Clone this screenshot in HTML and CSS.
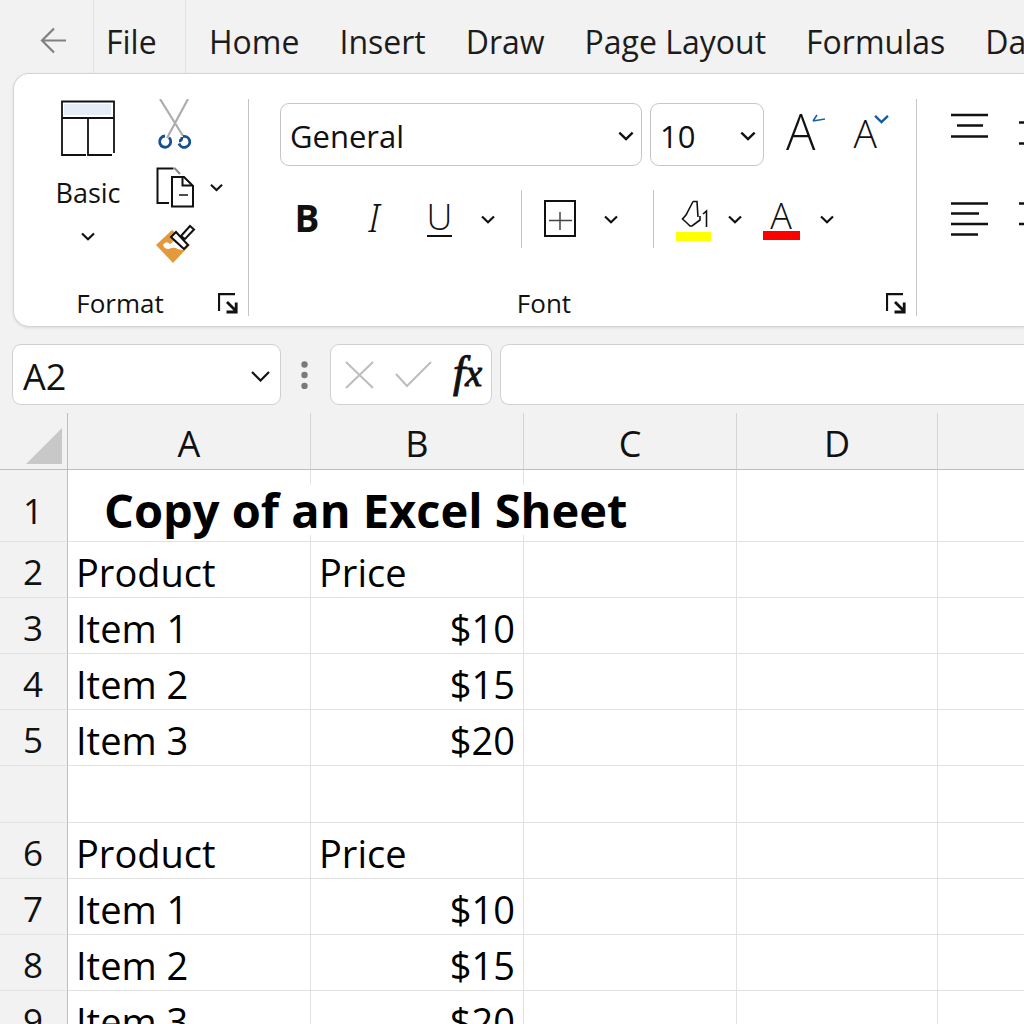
FILE: index.html
```html
<!DOCTYPE html>
<html lang="en">
<head>
<meta charset="utf-8">
<meta name="viewport" content="width=device-width, initial-scale=1">
<title>Copy of an Excel Sheet</title>
<link rel="stylesheet" href="styles.css">
</head>
<body>
<svg class="defs" aria-hidden="true">
  <symbol id="chevron" viewBox="0 0 14 9"><path d="M1 1.500 L7 7.300 L13 1.500" fill="none" stroke="currentColor" stroke-width="2.200"/></symbol>
  <symbol id="launcher" viewBox="0 0 20 21"><path d="M1 18V1.200H17" fill="none" stroke="currentColor" stroke-width="2.200"/><path d="M9 9L17 17M8.500 19H18.200V9.500" fill="none" stroke="currentColor" stroke-width="2.800"/></symbol>
</svg>

<nav class="tabs" aria-label="Ribbon tabs">
  <button class="back" aria-label="Back"><svg width="27" height="27" viewBox="0 0 27 27" fill="none" stroke="#808080" stroke-width="2.200"><path d="M26 13.500H2M14 1.500L2 13.500L14 25.500"/></svg></button>
  <a class="tab file" href="#file">File</a>
  <a class="tab" href="#home">Home</a>
  <a class="tab" href="#insert">Insert</a>
  <a class="tab" href="#draw">Draw</a>
  <a class="tab" href="#layout">Page Layout</a>
  <a class="tab" href="#formulas">Formulas</a>
  <a class="tab" href="#data">Data</a>
</nav>

<section class="ribbon" aria-label="Home ribbon">
  <div class="group format-group">
    <div class="format-tools">
      <button class="basic">
        <svg width="54" height="57" viewBox="0 0 54 57" fill="none" stroke="#111" stroke-width="1.800"><rect x="3" y="4" width="47" height="11" fill="#e4ecf7" stroke="none"/><path d="M51 55H27V18M25 55H1V1.500H53V53M1 18H53"/></svg>
        <span>Basic</span>
        <svg class="chevron" width="14" height="9"><use href="#chevron"/></svg>
      </button>
      <div class="clipboard">
        <button aria-label="Cut"><svg width="36" height="52" viewBox="0 0 36 52" fill="none"><path d="M4 0L27 37M32 0L11 39" stroke="#adadad" stroke-width="2.200"/><path d="M9 37a5.600 5.600 0 1 0 4 1.500M27 37.500a5.500 5.500 0 1 1 -4 7M23 42q3 0 3-4" stroke="#15508f" stroke-width="2.800"/></svg></button>
        <button class="copy" aria-label="Copy"><svg width="38" height="41" viewBox="0 0 38 41" fill="none" stroke="#111" stroke-width="2"><path d="M13 36H1.500V1.500H17"/><path d="M17 1.500H19L24 7" stroke="#888"/><path d="M16 10H28L37 19V39.500H16ZM26.500 10.500V18.500H36"/><path d="M23 28H32" stroke-width="1.500"/></svg><svg class="chevron" width="13" height="9"><use href="#chevron"/></svg></button>
        <button aria-label="Format Painter"><svg width="40" height="40" viewBox="0 0 40 40"><path d="M0 21L16 6L34 21L17 39Z" fill="#e29a3c"/><path d="M7 21Q10 16 14 20Q16 20 17 17L30 26Q22 26 20 24Q16 23 13 25Q8 25 7 21Z" fill="#fff"/><g fill="#fff" stroke="#111" stroke-width="2"><path d="M25 12L34 2L38 5.500L29 15Z"/><path d="M15 13L20 8L32 21L28 25Z"/></g></svg></button>
      </div>
    </div>
    <footer class="group-foot"><span>Format</span><button aria-label="Format settings"><svg width="20" height="21"><use href="#launcher"/></svg></button></footer>
  </div>

  <div class="group font-group">
    <div class="font-row">
      <label class="picker family"><select aria-label="Font"><option>General</option></select><svg class="chevron" width="16" height="10"><use href="#chevron"/></svg></label>
      <label class="picker size"><select aria-label="Font size"><option>10</option></select><svg class="chevron" width="16" height="10"><use href="#chevron"/></svg></label>
      <button class="grow" aria-label="Increase font size"><span>A</span><svg width="13" height="9" viewBox="0 0 13 9" fill="none" stroke="#1b5fae" stroke-width="1.600"><path d="M5 1L1 7M1 7L13 5"/></svg></button>
      <button class="shrink" aria-label="Decrease font size"><span>A</span><svg width="15" height="10"><use href="#chevron"/></svg></button>
    </div>
    <div class="style-row">
      <button class="bold">B</button>
      <button class="italic">I</button>
      <button class="underline"><span>U</span></button>
      <button aria-label="Underline options"><svg class="chevron" width="14" height="9"><use href="#chevron"/></svg></button>
      <i class="divider"></i>
      <button aria-label="Borders"><svg width="32" height="38" viewBox="0 0 32 38" fill="none" stroke="#111"><rect x="1" y="1" width="30" height="35" stroke-width="2"/><path d="M16 12V30M5 20.500H28" stroke="#444" stroke-width="1.500"/></svg></button>
      <button aria-label="Border options"><svg class="chevron" width="14" height="9"><use href="#chevron"/></svg></button>
      <i class="divider"></i>
      <button class="fill" aria-label="Fill color"><svg width="35" height="42" viewBox="0 0 35 42" fill="none" stroke="#111" stroke-width="1.600"><path d="M17 1.500H21L22 17M17 1.500L10 15L6.500 19Q10 22 14 26H16L24 20V16M27 14L30.500 11V27"/><path d="M0 32H35V41H0Z" fill="#ffff00" stroke="none"/></svg></button>
      <button aria-label="Fill color options"><svg class="chevron" width="14" height="9"><use href="#chevron"/></svg></button>
      <button class="color" aria-label="Font color"><span>A</span></button>
      <button aria-label="Font color options"><svg class="chevron" width="14" height="9"><use href="#chevron"/></svg></button>
    </div>
    <footer class="group-foot"><span>Font</span><button aria-label="Font settings"><svg width="20" height="21"><use href="#launcher"/></svg></button></footer>
  </div>

  <div class="group align-group">
    <button aria-label="Top align"><svg width="37" height="38" viewBox="0 0 37 38" stroke="#111" stroke-width="2.400"><path d="M0 2H37M6 12.500H32M0 23.500H37"/></svg></button>
    <button aria-label="Middle align"><svg width="37" height="38" viewBox="0 0 37 38" stroke="#111" stroke-width="2.400"><path d="M0 9.500H37M0 30.500H37"/></svg></button>
    <button aria-label="Align left"><svg width="37" height="38" viewBox="0 0 37 38" stroke="#111" stroke-width="2.400"><path d="M0 2.500H37M0 12.500H28M0 23H37M0 33.500H27"/></svg></button>
    <button aria-label="Center"><svg width="37" height="38" viewBox="0 0 37 38" stroke="#111" stroke-width="2.400"><path d="M0 2.500H37M6 12.500H31M0 23H37M6 33.500H31"/></svg></button>
  </div>
</section>

<section class="formula-bar" aria-label="Formula bar">
  <div class="box name-box"><input type="text" value="A2" aria-label="Name box"><button aria-label="Named ranges"><svg width="19" height="11" viewBox="0 0 19 11" fill="none" stroke="#111" stroke-width="2.200"><path d="M1 1L9.500 9.500L18 1"/></svg></button></div>
  <svg class="dots" width="7" height="28" viewBox="0 0 7 28" fill="#7a7a7a"><circle cx="3.500" cy="3.500" r="3.200"/><circle cx="3.500" cy="14" r="3.200"/><circle cx="3.500" cy="25" r="3.200"/></svg>
  <div class="box entry">
    <button aria-label="Cancel"><svg width="29" height="28" viewBox="0 0 29 28" stroke="#bdbdbd" stroke-width="2"><path d="M1 1L28 27M28 1L1 27"/></svg></button>
    <button aria-label="Enter"><svg width="37" height="27" viewBox="0 0 37 27" fill="none" stroke="#bdbdbd" stroke-width="2"><path d="M1 13L12 25L36 1"/></svg></button>
    <button class="fx" aria-label="Insert function"><span>f</span><span class="var">x</span></button>
  </div>
  <input class="box formula" type="text" aria-label="Formula">
</section>

<main class="sheet">
  <table>
    <colgroup><col class="c-num"><col class="c-a"><col class="c-b"><col class="c-b"><col class="c-d"><col></colgroup>
    <thead>
      <tr><th class="corner"><svg width="36" height="36" viewBox="0 0 36 36"><path d="M36 0V36H0Z" fill="#c8c8c8"/></svg></th><th>A</th><th>B</th><th>C</th><th>D</th><th></th></tr>
    </thead>
    <tbody>
      <tr class="title"><th>1</th><td><span>Copy of an Excel Sheet</span></td><td></td><td></td><td></td><td></td></tr>
      <tr><th>2</th><td>Product</td><td>Price</td><td></td><td></td><td></td></tr>
      <tr><th>3</th><td>Item 1</td><td class="num">$10</td><td></td><td></td><td></td></tr>
      <tr><th>4</th><td>Item 2</td><td class="num">$15</td><td></td><td></td><td></td></tr>
      <tr><th>5</th><td>Item 3</td><td class="num">$20</td><td></td><td></td><td></td></tr>
      <tr class="blank"><th></th><td></td><td></td><td></td><td></td><td></td></tr>
      <tr><th>6</th><td>Product</td><td>Price</td><td></td><td></td><td></td></tr>
      <tr><th>7</th><td>Item 1</td><td class="num">$10</td><td></td><td></td><td></td></tr>
      <tr><th>8</th><td>Item 2</td><td class="num">$15</td><td></td><td></td><td></td></tr>
      <tr><th>9</th><td>Item 3</td><td class="num">$20</td><td></td><td></td><td></td></tr>
    </tbody>
  </table>
</main>
</body>
</html>
```
FILE: styles.css
```css
* { box-sizing: border-box; }
body {
  margin: 0;
  height: 100vh;
  display: flex;
  flex-direction: column;
  overflow: hidden;
  background: #f2f2f2;
  color: #111;
  font-family: "Open Sans", "Noto Sans", sans-serif;
}
.defs { display: none; }
svg { display: block; flex: none; }
button {
  display: flex;
  align-items: center;
  justify-content: center;
  padding: 0;
  border: 0;
  background: none;
  color: inherit;
  font: inherit;
}
input, select { color: inherit; font: inherit; outline: 0; }

/* Tabs */
.tabs { display: flex; flex: none; height: 73px; overflow: hidden; }
.back { flex: none; width: 94px; padding: 8px 0 0 13px; border-right: 1px solid #e2e2e2; }
.tab {
  flex: none;
  margin-left: 6px;
  padding: 0 17px;
  font-size: 32px;
  line-height: 84px;
  color: #1c1c1c;
  text-decoration: none;
  white-space: nowrap;
}
.tab.file { width: 92px; margin: 0; padding: 0 12px; border-right: 1px solid #e2e2e2; }

/* Ribbon */
.ribbon {
  display: flex;
  flex: none;
  height: 254px;
  margin-left: 13px;
  padding: 25px 0 10px;
  overflow: hidden;
  background: #fff;
  border: 1px solid #d4d4d4;
  border-right: 0;
  border-radius: 16px 0 0 16px;
  box-shadow: 0 1px 3px #00000018;
}
.group { display: flex; flex: none; flex-direction: column; border-right: 1px solid #c6c6c6; }
.format-group { width: 235px; }
.format-tools { display: flex; gap: 35px; padding-left: 41px; }
.basic { flex-direction: column; justify-content: flex-start; width: 66px; padding-top: 1px; font-size: 27px; line-height: 36px; }
.basic span { margin: 18px 0 21px; }
.clipboard { display: flex; flex-direction: column; align-items: flex-start; gap: 16px; }
.copy { gap: 16px; }
.group-foot {
  display: flex;
  align-items: center;
  margin-top: auto;
  padding-right: 10px;
  font-size: 26px;
  line-height: 26px;
}
.group-foot span { flex: 1; padding-left: 8px; text-align: center; }
.font-group { width: 668px; padding: 4px 0 0 31px; }
.font-group .group-foot span { padding: 0 78px 0 0; }
.font-row { display: flex; gap: 8px; height: 63px; }
.picker { display: grid; grid-template-columns: 1fr 24px; align-items: center; }
.picker select {
  grid-area: 1 / 1 / 2 / 3;
  height: 63px;
  padding: 2px 9px 0;
  appearance: none;
  border: 1px solid #c6c6c6;
  border-radius: 9px;
  background: #fff;
  font-size: 31px;
}
.picker .chevron { grid-area: 1 / 2; margin-top: 2px; pointer-events: none; }
.family { width: 362px; }
.size { width: 114px; }
.grow, .shrink { align-items: flex-start; font-weight: 300; }
.grow { margin-left: 14px; font-size: 49px; line-height: 56px; }
.grow svg { margin: 11px 0 0 -3px; }
.shrink { margin-left: 20px; font-size: 39px; line-height: 60px; }
.shrink svg { margin: 11px 0 0 -3px; color: #1459a5; }
.style-row {
  display: grid;
  grid-template-columns: 54px 80px 50px 48px 18px 60px 42px 43px 36px 48px 44px 48px;
  height: 58px;
  margin-top: 24px;
}
.divider { justify-self: center; width: 1px; background: #c6c6c6; }
.bold { padding-bottom: 4px; font-size: 37px; font-weight: 700; }
.italic { padding-bottom: 4px; font: italic 300 38px "Noto Sans", sans-serif; }
.underline, .color { font-size: 36px; font-weight: 300; }
.underline span { width: 25px; height: 36px; line-height: 32px; border-bottom: 2px solid; }
.fill { padding-top: 3px; }
.color span { width: 37px; height: 42px; line-height: 36px; border-bottom: 9px solid #f00; }
.align-group {
  display: grid;
  grid-template-columns: 37px 37px;
  grid-auto-rows: 38px;
  gap: 50px 31px;
  padding: 14px 0 0 34px;
  border: 0;
}

/* Formula bar */
.formula-bar { display: flex; flex: none; align-items: center; height: 61px; margin: 17px 0 8px 12px; }
.box { height: 61px; background: #fff; border: 1px solid #d0d0d0; border-radius: 9px; }
.name-box { display: flex; flex: none; width: 269px; padding: 3px 10px 0; }
.name-box input { flex: 1; min-width: 0; padding: 0; border: 0; background: none; font-size: 36px; }
.dots { margin: 0 22px 0 20px; }
.entry { display: flex; flex: none; align-items: center; gap: 21px; width: 162px; padding: 0 10px 0 14px; }
.fx { flex: 1; padding-bottom: 4px; font: italic 44px "Liberation Serif", serif; -webkit-text-stroke: 1px; }
.fx .var { font-size: 38px; }
.formula { flex: 1; min-width: 0; margin-left: 8px; border-right: 0; border-radius: 9px 0 0 9px; }

/* Worksheet */
.sheet { flex: 1; min-height: 0; overflow: hidden; }
table { width: 100%; table-layout: fixed; border-spacing: 0; background: #fff; }
.c-num { width: 68px; }
.c-a { width: 243px; }
.c-b { width: 213px; }
.c-d { width: 201px; }
th, td {
  height: 56px;
  padding: 4px 8px 0;
  border-right: 1px solid #e2e2e2;
  border-bottom: 1px solid #e2e2e2;
  font-size: 38px;
  font-weight: 400;
  line-height: 50px;
  text-align: left;
  white-space: nowrap;
  color: #000;
}
th { background: #f2f2f2; text-align: center; font-size: 36px; color: #111; }
thead th { height: 57px; border-color: #d4d4d4; border-bottom-color: #bdbdbd; padding-top: 6px; }
tbody th, thead .corner { border-right-color: #bdbdbd; }
thead .corner { padding: 9px 5px 0 0; }
.corner svg { margin-left: auto; }
tbody th { padding: 4px 1px 0 0; font-size: 35px; }
th:last-child, td:last-child { border-right: 0; }
.blank td { height: 57px; }
.title th, .title td { height: 72px; padding-top: 12px; }
.title th { padding-top: 10px; }
.title td { padding-left: 36px; }
.title span { display: inline-block; font-size: 47px; font-weight: 700; background: #fff; }
.num { text-align: right; }
```
